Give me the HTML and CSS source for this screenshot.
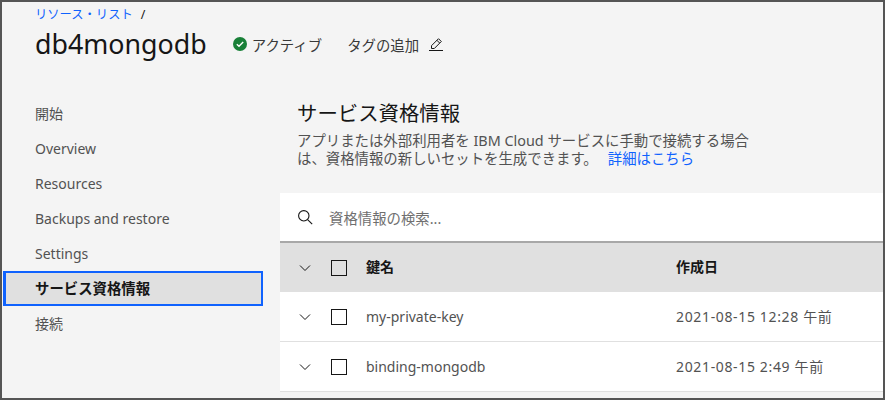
FILE: index.html
```html
<!DOCTYPE html>
<html lang="ja">
<head>
  <meta charset="UTF-8" />
  <title>db4mongodb</title>
  <link rel="stylesheet" href="styles.css">
</head>
<body>
  <div class="frame">
    <header class="page-header">
      <div class="breadcrumb"><a class="link" href="#">リソース・リスト</a><span class="slash">/</span></div>
      <div class="title-row">
        <h1 class="title">db4mongodb</h1>
        <span class="status">
          <svg class="status-icon" width="16" height="16" viewBox="0 0 16 16"><circle cx="8" cy="8" r="7" fill="#198038"/><path d="M4.8 8.2l2.2 2.1 4.2-4.3" fill="none" stroke="#fff" stroke-width="1.4"/></svg>
          アクティブ
        </span>
        <span class="add-tag">タグの追加
          <svg width="16" height="16" viewBox="0 0 16 16" fill="none" stroke="#161616" stroke-width="1"><path d="M1 14.5h14"/><path d="M3.5 12.5v-2.8l7-7 2.8 2.8-7 7z"/><path d="M8.8 4.2l2.8 2.8"/></svg>
        </span>
      </div>
    </header>

    <div class="main">
      <nav class="side-nav">
        <a class="nav-item" href="#">開始</a>
        <a class="nav-item" href="#">Overview</a>
        <a class="nav-item" href="#">Resources</a>
        <a class="nav-item" href="#">Backups and restore</a>
        <a class="nav-item" href="#">Settings</a>
        <a class="nav-item active" href="#">サービス資格情報</a>
        <a class="nav-item" href="#">接続</a>
      </nav>

      <section class="content">
        <div class="intro">
          <h2 class="section-title">サービス資格情報</h2>
          <div class="section-text">
            <div>アプリまたは外部利用者を IBM Cloud サービスに手動で接続する場合</div>
            <div class="text-line"><span>は、資格情報の新しいセットを生成できます。</span><a class="link" href="#">詳細はこちら</a></div>
          </div>
        </div>

        <div class="search">
          <svg width="16" height="16" viewBox="0 0 16 16" fill="none" stroke="#161616" stroke-width="1.1"><circle cx="6.8" cy="6.8" r="5.2"/><path d="M10.6 10.6l4.6 4.6"/></svg>
          <span class="placeholder">資格情報の検索...</span>
        </div>

        <div class="row row-head">
          <svg class="chev" width="16" height="16" viewBox="0 0 16 16" fill="none" stroke="#161616" stroke-width="1"><path d="M3 5.5l5 5 5-5"/></svg>
          <span class="check"></span>
          <span class="col-name">鍵名</span>
          <span class="col-date">作成日</span>
        </div>
        <div class="row">
          <svg class="chev" width="16" height="16" viewBox="0 0 16 16" fill="none" stroke="#161616" stroke-width="1"><path d="M3 5.5l5 5 5-5"/></svg>
          <span class="check"></span>
          <span class="col-name">my-private-key</span>
          <span class="col-date date-value">2021-08-15 12:28 午前</span>
        </div>
        <div class="row">
          <svg class="chev" width="16" height="16" viewBox="0 0 16 16" fill="none" stroke="#161616" stroke-width="1"><path d="M3 5.5l5 5 5-5"/></svg>
          <span class="check"></span>
          <span class="col-name">binding-mongodb</span>
          <span class="col-date date-value">2021-08-15 2:49 午前</span>
        </div>
      </section>
    </div>
  </div>
</body>
</html>
```

FILE: styles.css
```css
html, body {
  margin: 0;
  padding: 0;
}
body {
  width: 886px;
  height: 402px;
  overflow: hidden;
  font-family: "Noto Sans", "Noto Sans CJK JP", sans-serif;
  color: #161616;
}
.frame {
  box-sizing: border-box;
  width: 885px;
  height: 400px;
  border: 2px solid #555;
  background: #f4f4f4;
  overflow: hidden;
}
.link {
  color: #0f62fe;
  text-decoration: none;
}
.page-header {
  padding: 5px 0 0 33px;
}
.breadcrumb {
  font-size: 12.3px;
  line-height: 16px;
}
.slash {
  margin-left: 8px;
}
.title-row {
  display: flex;
  align-items: center;
  margin-top: -1px;
  height: 44px;
}
.title {
  margin: 0;
  font-size: 26.8px;
  font-weight: 400;
  line-height: 36px;
}
.status {
  display: flex;
  align-items: center;
  gap: 4px;
  margin-left: 25px;
  font-size: 14.4px;
  color: #393939;
}
.add-tag {
  display: flex;
  align-items: center;
  gap: 9px;
  margin-left: 25px;
  font-size: 14.4px;
  color: #393939;
}
.main {
  display: flex;
  margin-top: 28px;
}
.side-nav {
  width: 278px;
  flex: none;
  padding-top: 2px;
}
.nav-item {
  box-sizing: border-box;
  display: block;
  width: 261px;
  height: 35px;
  padding-left: 33px;
  font-size: 14px;
  line-height: 35px;
  color: #525252;
  text-decoration: none;
}
.nav-item.active {
  margin-left: 1px;
  width: 260px;
  padding-left: 29px;
  font-size: 14.4px;
  line-height: 31px;
  font-weight: 700;
  color: #161616;
  background: #e0e0e0;
  border: 2px solid #0f62fe;
  border-left-width: 3px;
}
.content {
  flex: 1;
}
.intro {
  padding: 0 0 0 17px;
  height: 99px;
}
.section-title {
  margin: 0;
  padding-top: 5px;
  font-size: 20.4px;
  font-weight: 400;
  line-height: 28px;
}
.section-text {
  margin-top: 5px;
  font-size: 14.4px;
  line-height: 18px;
  color: #525252;
}
.text-line {
  display: flex;
  gap: 10px;
}
.search {
  display: flex;
  align-items: center;
  height: 48px;
  padding-left: 17px;
  background: #fff;
}
.placeholder {
  margin-left: 16px;
  font-size: 14.4px;
  color: #6f6f6f;
}
.row {
  display: flex;
  align-items: center;
  box-sizing: border-box;
  height: 50px;
  padding-left: 17px;
  background: #fff;
  border-bottom: 1px solid #e0e0e0;
  font-size: 14px;
  color: #525252;
}
.row-head {
  height: 51px;
  border-top: 2px solid #a8a8a8;
  border-bottom: 0;
  background: #e0e0e0;
  font-weight: 700;
  color: #161616;
}
.check {
  box-sizing: border-box;
  width: 16px;
  height: 16px;
  margin-left: 18px;
  border: 1px solid #161616;
}
.col-name {
  margin-left: 19px;
  margin-bottom: 1px;
  width: 310px;
}
.col-date {
  margin-bottom: 1px;
}
.row-head .col-name,
.row-head .col-date {
  margin-bottom: 4px;
}
.date-value {
  letter-spacing: 0.65px;
}
```
